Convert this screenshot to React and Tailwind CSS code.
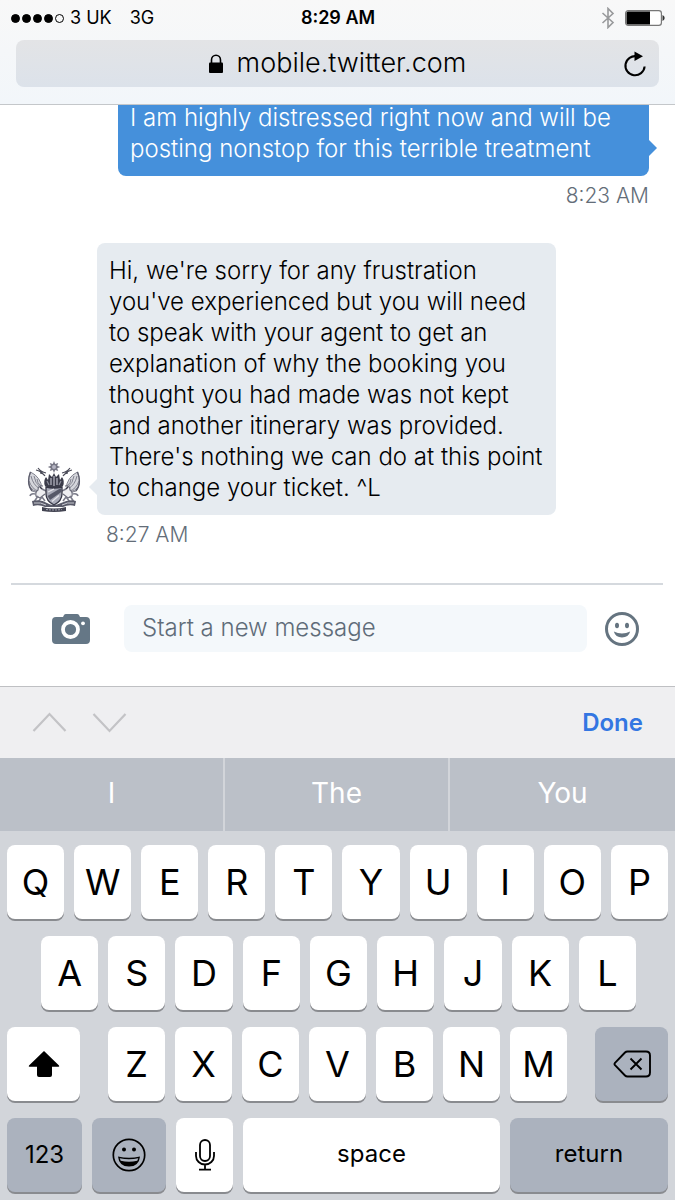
import { useState } from 'react'
import { clsx } from 'clsx'

const SIGNAL_DOTS = [true, true, true, true, false]
const TOP_ROW = ['Q', 'W', 'E', 'R', 'T', 'Y', 'U', 'I', 'O', 'P']
const HOME_ROW = ['A', 'S', 'D', 'F', 'G', 'H', 'J', 'K', 'L']
const BOTTOM_ROW = ['Z', 'X', 'C', 'V', 'B', 'N', 'M']
const SUGGESTIONS = ['I', 'The', 'You']

export default function App() {
  const [message, setMessage] = useState('')

  function handleKey(char) {
    setMessage(prev => prev + char)
  }

  function handleDelete() {
    setMessage(prev => prev.slice(0, -1))
  }

  return (
    <div className="flex h-screen flex-col overflow-hidden bg-white font-['Inter','Liberation_Sans',sans-serif] text-black">
      <BrowserHeader />
      <Conversation />
      <Composer message={message} onChange={setMessage} />
      <Keyboard onKey={handleKey} onDelete={handleDelete} />
    </div>
  )
}

function BrowserHeader() {
  return (
    <header className="relative z-10 shrink-0 border-b border-[#c4c7ca] bg-linear-to-b from-[#f8f8f8] to-[#f2f6fa] pb-[17px]">
      <div className="grid h-10 grid-cols-3 items-center pr-[10px] pl-[11px] pb-1 text-lg">
        <div className="flex items-center">
          <div className="flex gap-[2px]">
            {SIGNAL_DOTS.map((filled, i) => (
              <span key={i} className={clsx('size-[9px] rounded-full border border-black', filled && 'bg-black')} />
            ))}
          </div>
          <span className="ml-[6px]">3 UK</span>
          <span className="ml-[18px]">3G</span>
        </div>
        <span className="text-center font-semibold">8:29 AM</span>
        <div className="flex items-center justify-end gap-[10px]">
          <BluetoothIcon />
          <BatteryIcon />
        </div>
      </div>
      <div className="relative mx-4 flex h-[47px] items-center justify-center gap-[14px] rounded-lg bg-linear-to-b from-[#e3e4e6] to-[#dce2ea]">
        <LockIcon />
        <span className="text-[27px] font-light">mobile.twitter.com</span>
        <button type="button" aria-label="Reload" className="absolute right-3">
          <ReloadIcon />
        </button>
      </div>
    </header>
  )
}

function Conversation() {
  return (
    <main className="flex min-h-0 flex-1 flex-col justify-end overflow-hidden pb-[33px] text-2xl leading-[31px] font-light">
      <div className="mr-[26px] ml-[118px] flex flex-col">
        <div className="relative rounded-lg bg-[#4590db] p-3 text-white">
          I am highly distressed right now and will be posting nonstop for this terrible treatment
          <span className="absolute right-[-8px] bottom-5 h-4 w-2 bg-[#4590db] [clip-path:polygon(0_0,100%_50%,0_100%)]" />
        </div>
        <time className="mt-1 self-end text-[21px] leading-[31px] text-[#636d78]">8:23 AM</time>
      </div>

      <div className="mt-8 flex items-end pl-[27px]">
        <CrestAvatar />
        <div className="relative ml-4 w-[459px] rounded-lg bg-[#e6ebf0] py-3 pr-2 pl-3">
          Hi, we're sorry for any frustration you've experienced but you will need to speak with your agent to get an explanation of why the booking you thought you had made was not kept and another itinerary was provided. There's nothing we can do at this point to change your ticket. ^L
          <span className="absolute bottom-5 left-[-8px] h-4 w-2 bg-[#e6ebf0] [clip-path:polygon(100%_0,0_50%,100%_100%)]" />
        </div>
      </div>
      <time className="mt-1 ml-[106px] text-[21px] leading-[31px] text-[#636d78]">8:27 AM</time>
    </main>
  )
}

function Composer({ message, onChange }) {
  return (
    <form className="mr-3 ml-[11px] flex shrink-0 items-center border-t-2 border-[#d5d9de] pt-5 pr-6 pb-[34px] pl-[41px]" onSubmit={e => e.preventDefault()}>
      <button type="button" aria-label="Add photo">
        <CameraIcon />
      </button>
      <input
        type="text"
        aria-label="Message"
        placeholder="Start a new message"
        value={message}
        onChange={e => onChange(e.target.value)}
        className="ml-[34px] h-[47px] min-w-0 flex-1 rounded-lg bg-[#f4f8fb] px-[18px] pb-[2px] text-2xl font-light outline-none placeholder:text-[#5f6c79]"
      />
      <button type="button" aria-label="Add emoji" className="ml-[18px]">
        <SmileIcon />
      </button>
    </form>
  )
}

function Keyboard({ onKey, onDelete }) {
  return (
    <section className="shrink-0 bg-[#d2d5da]">
      <div className="flex h-[72px] items-center border-t border-[#bfc0c3] bg-[#efeff1] px-8">
        <button type="button" aria-label="Previous field">
          <ChevronIcon points="1.5,19 17.5,2 33.5,19" />
        </button>
        <button type="button" aria-label="Next field" className="ml-[25px]">
          <ChevronIcon points="1.5,2 17.5,19 33.5,2" />
        </button>
        <button type="button" className="ml-auto text-2xl font-semibold text-[#3376e2]">Done</button>
      </div>

      <div className="grid h-[73px] grid-cols-3 divide-x-2 divide-[#d2d5da] bg-[#bbc0c8]">
        {SUGGESTIONS.map(word => (
          <button key={word} type="button" className="pb-1 text-[28px] text-white" onClick={() => onKey(word)}>
            {word}
          </button>
        ))}
      </div>

      <div className="flex flex-col gap-[17px] px-[7px] pt-[14px] pb-2">
        <div className="flex gap-[10px]">
          {TOP_ROW.map(char => <LetterKey key={char} char={char} onKey={onKey} />)}
        </div>
        <div className="flex gap-[10px] pr-8 pl-[34px]">
          {HOME_ROW.map(char => <LetterKey key={char} char={char} onKey={onKey} />)}
        </div>
        <div className="flex gap-7">
          <Key label="Shift" className="w-[73px] bg-white"><ShiftIcon /></Key>
          <div className="flex flex-1 gap-[10px]">
            {BOTTOM_ROW.map(char => <LetterKey key={char} char={char} onKey={onKey} />)}
          </div>
          <Key label="Delete" className="w-[73px] bg-[#abb2be]" onClick={onDelete}><DeleteIcon /></Key>
        </div>
        <div className="flex gap-[10px]">
          <Key className="w-[75px] bg-[#abb2be]">123</Key>
          <Key label="Emoji" className="w-[74px] bg-[#abb2be]"><EmojiIcon /></Key>
          <Key label="Dictate" className="w-[57px] bg-white"><MicIcon /></Key>
          <Key className="flex-1 bg-white pb-[2px]" onClick={() => onKey(' ')}>space</Key>
          <Key className="w-[158px] bg-[#abb2be] pb-[2px]">return</Key>
        </div>
      </div>
    </section>
  )
}

function Key({ label, className, onClick, children }) {
  return (
    <button
      type="button"
      aria-label={label}
      onClick={onClick}
      className={clsx('flex h-[74px] items-center justify-center rounded-lg text-2xl shadow-[0_2px_0_#898b8f]', className)}
    >
      {children}
    </button>
  )
}

function LetterKey({ char, onKey }) {
  return (
    <Key className="min-w-0 flex-1 bg-white" onClick={() => onKey(char)}>
      <span className="text-4xl">{char}</span>
    </Key>
  )
}

function BluetoothIcon() {
  return (
    <svg width="14" height="22" viewBox="0 0 14 22" fill="none" stroke="#98999b" strokeWidth="1.6">
      <path d="M1.5 6 12 15.5 7 20.5V1.5L12 6.5 1.5 16" />
    </svg>
  )
}

function BatteryIcon() {
  return (
    <svg width="40" height="16" viewBox="0 0 40 16">
      <rect x="0.6" y="0.6" width="35.8" height="14.8" rx="2.6" fill="#fff" stroke="#777" strokeWidth="1.2" />
      <path d="M3 1.5h22v13H3Q1.5 14.5 1.5 13V3Q1.5 1.5 3 1.5z" fill="#000" />
      <path d="M37.5 5q2.2 1 2.2 3t-2.2 3z" fill="#333" />
    </svg>
  )
}

function LockIcon() {
  return (
    <svg width="14" height="20" viewBox="0 0 14 20">
      <rect y="8.5" width="14" height="10.5" rx="1" fill="#000" />
      <path d="M2.5 9V6a4.5 4.8 0 0 1 9 0v3" fill="none" stroke="#000" strokeWidth="1.6" />
    </svg>
  )
}

function ReloadIcon() {
  return (
    <svg width="24" height="26" viewBox="0 0 24 26">
      <path d="M14 5.3A9.6 9.6 0 1 0 21.6 15.5" fill="none" stroke="#000" strokeWidth="2.1" />
      <path d="M11.5 0.5 20 5.3 11.5 10z" fill="#000" />
    </svg>
  )
}

function CameraIcon() {
  return (
    <svg width="38" height="30" viewBox="0 0 38 30">
      <path d="M4 3h7l1-2q.6-1 2-1h11q1.4 0 2 1l1 2h6q4 0 4 4v19q0 4-4 4H4q-4 0-4-4V7q0-4 4-4z" fill="#657786" />
      <circle cx="18.5" cy="15.5" r="7.5" fill="none" stroke="#fff" strokeWidth="3.8" />
      <circle cx="31" cy="9.3" r="1.9" fill="#fff" />
    </svg>
  )
}

function SmileIcon() {
  return (
    <svg width="34" height="34" viewBox="0 0 34 34" fill="#657480">
      <circle cx="17" cy="17" r="15.5" fill="none" stroke="#657480" strokeWidth="3" />
      <ellipse cx="12" cy="13.5" rx="2" ry="2.8" />
      <ellipse cx="22" cy="13.5" rx="2" ry="2.8" />
      <path d="M8.8 19.6q8.2 4 16.4 0Q23.5 25.5 17 25.5T8.8 19.6z" />
    </svg>
  )
}

function ChevronIcon({ points }) {
  return (
    <svg width="35" height="21" viewBox="0 0 35 21" fill="none" stroke="#c3c3c6" strokeWidth="2.2">
      <polyline points={points} />
    </svg>
  )
}

function ShiftIcon() {
  return (
    <svg width="32" height="28" viewBox="0 0 32 28">
      <path d="M16 1 31 15.5q.8 1.200-.6 1.200H24V25q0 2-2 2H11q-2 0-2-2v-8.300H1.600q-1.400 0-.6-1.200z" fill="#000" />
    </svg>
  )
}

function DeleteIcon() {
  return (
    <svg width="38" height="28" viewBox="0 0 38 28" fill="none" stroke="#000" strokeWidth="1.9" strokeLinejoin="round">
      <path d="M14.5 1.5H33q4 0 4 4v17q0 4-4 4H14.5q-1.5 0-2.5-1L2 15.2q-1-1.2 0-2.4L12 2.5q1-1 2.5-1z" />
      <path d="m17.5 8.5 11 11m0-11-11 11" />
    </svg>
  )
}

function EmojiIcon() {
  return (
    <svg width="34" height="34" viewBox="0 0 34 34">
      <circle cx="17" cy="17" r="15.7" fill="none" stroke="#000" strokeWidth="1.7" />
      <circle cx="12" cy="11.5" r="2" />
      <circle cx="22" cy="11.5" r="2" />
      <path d="M6 18.5q11 2.500 22 0Q27 28.500 17 28.500T6 18.500z" />
      <path d="M7.700 20.300q9.300 2 18.600 0l-1 2.500q-8.300 2-16.600 0z" fill="#abb2be" />
    </svg>
  )
}

function MicIcon() {
  return (
    <svg width="20" height="32" viewBox="0 0 20 32" fill="none" stroke="#000" strokeWidth="1.8">
      <rect x="5" y="1" width="10" height="21" rx="5" />
      <path d="M1 13v4a9 8.5 0 0 0 18 0v-4M10 25.5V30M4 30.7h12" />
    </svg>
  )
}

function CrestWing() {
  return (
    <g fill="none" stroke="#82838f" strokeWidth="1">
      {/* wing feathers */}
      <path d="M3.5 11Q-1 22 5 30l7 2 3-4Q14 16 3.5 11z" fill="#d5d6dc" />
      <path d="M4 15q2 9 9 13M2 20q3 8 9 10M3 26q3 4 8 5M7 15q1 7 6 11M10 18q0 4 4 7" />
      <path d="M3.5 11Q-1 22 5 30" stroke="#5c5d6c" strokeWidth="1.3" />
      {/* crest plumes */}
      <path d="M9 9q5 1 8 5M11 7q3 4 8 5M13 12q3 0 5 3" stroke="#4a4b58" strokeWidth="1.2" />
      {/* rearing beast */}
      <path d="M16 25q-5-1-5 4-3 2-2 6l4 2 5-4" fill="#eeeef1" stroke="#6d6e7c" strokeWidth="1.2" />
      <path d="M11 35q-2 3-4 6h4l4-5 3 4M8 33q-4-1-5 2M15 28l4 2" stroke="#7b7c8a" strokeWidth="1.6" />
      <path d="M13 26l2 2" stroke="#363746" strokeWidth="1.5" />
    </g>
  )
}

function CrestAvatar() {
  return (
    <svg width="54" height="54" viewBox="0 0 54 54" role="img" aria-label="Airline crest" className="shrink-0">
      {/* sun */}
      <path d="M27 0l1.2 3 3-1-1 2.7 3 1.3-3 1.3 1 2.7-3-1L27 12l-1.2-3-3 1 1-2.7-3-1.3 3-1.3-1-2.7 3 1z" fill="#777785" />
      <circle cx="27" cy="6" r="2" fill="#b4b4c2" />
      {/* mantling and helm */}
      <path d="M18 25q-2-5 1-9l2 3 1-6 3 3 2-4 2 4 3-3 1 6 2-3q3 4 1 9l-4 2H22z" fill="#3b3c4a" />
      <path d="M24 17v7m3-9v10m3-8v7" stroke="#b9bac6" strokeWidth="1.2" />
      <path d="M20 20l2 4m12-4-2 4" stroke="#8d8e9c" strokeWidth="1.2" />
      {/* supporters */}
      <CrestWing />
      <g transform="translate(54 0) scale(-1 1)">
        <CrestWing />
      </g>
      {/* compartment and scroll */}
      <path d="M5 40q9-2 15 2t14 0 15-2l-1 5q-6-2-12 1H18q-6-3-12-1z" fill="#595a69" />
      <path d="M7 42q7-1 12 2m16 0q5-3 12-2" stroke="#c9cad2" fill="none" />
      <path d="M15 46q12 3 24 0v4q-12 2-24 0z" fill="#434452" />
      <path d="M19 48.5q8 1 16 0" stroke="#9fa0ad" strokeDasharray="2 1" fill="none" />
      {/* shield */}
      <path d="M19 26q8 2 16 0v7q0 7-8 11-8-4-8-11z" fill="#a9abb8" stroke="#363746" strokeWidth="1.3" />
      <path d="M20.5 35 33 27.5h1.3V31L23 39z" fill="#565868" />
      <path d="M21 31l6-3M25 40.5l7-6" stroke="#e5e5eb" strokeWidth="1.2" />
    </svg>
  )
}
